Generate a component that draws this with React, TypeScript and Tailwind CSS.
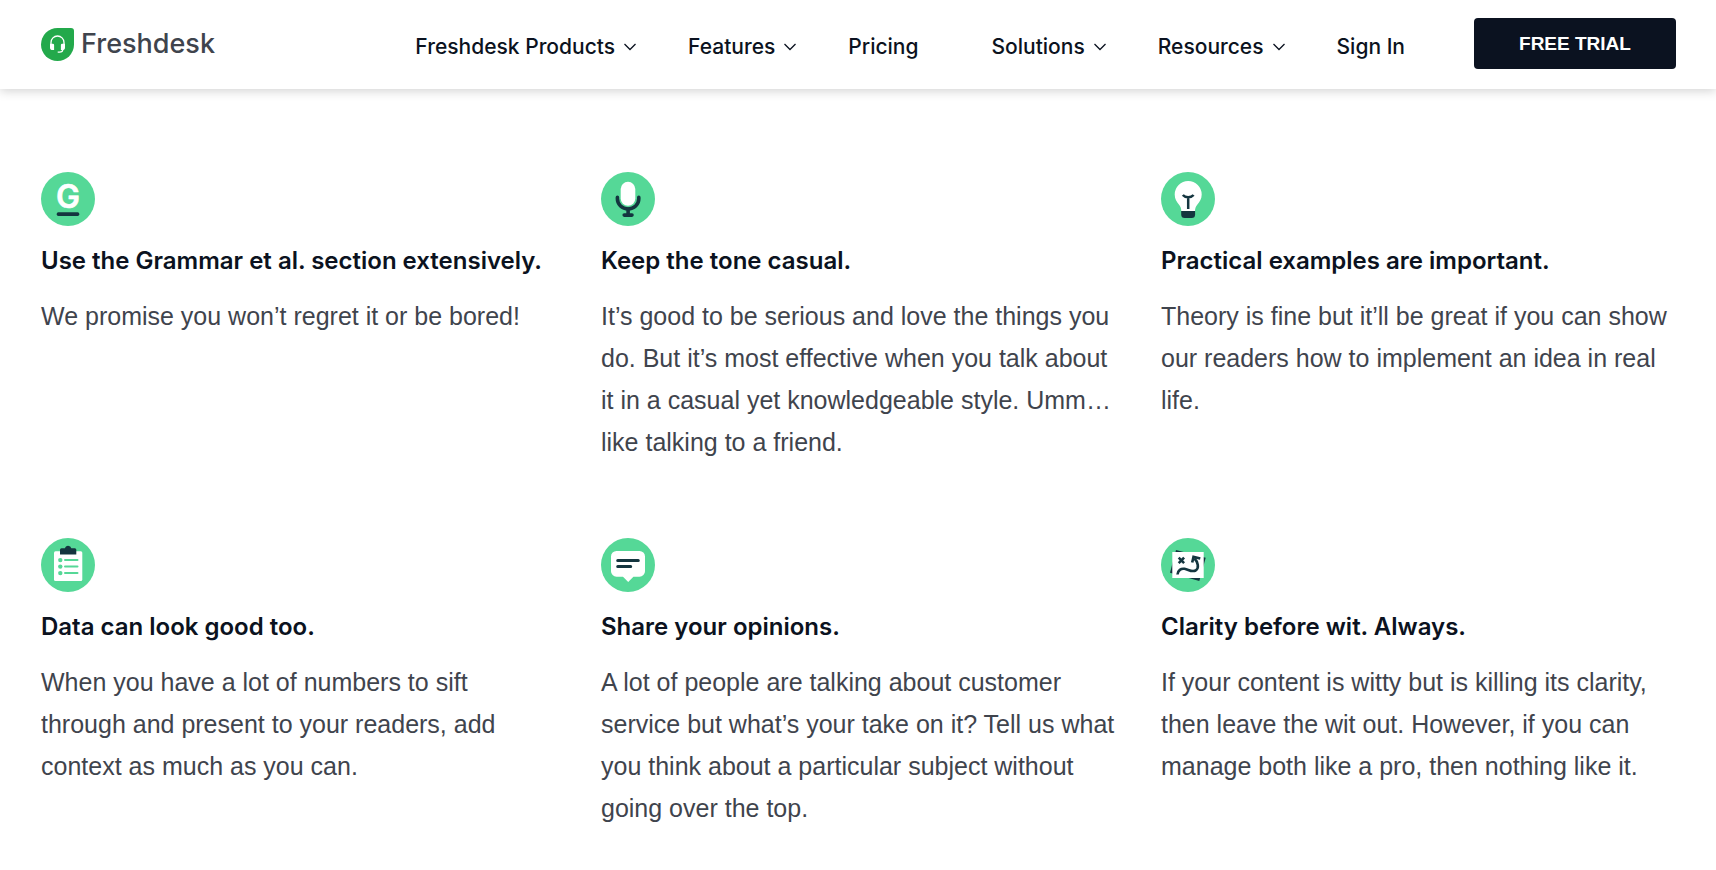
import type { ReactNode } from "react";

const DARK = "#14353f";

function Badge({ children }: { children: ReactNode }) {
  return (
    <svg viewBox="0 0 54 54" className="block size-[54px]" aria-hidden="true">
      <circle cx="27" cy="27" r="27" fill="#55d897" />
      {children}
    </svg>
  );
}

const grammarIcon = (
  <Badge>
    <text x="27" y="35.6" textAnchor="middle" fill="#fff" stroke="#fff" strokeWidth="0.6" strokeLinejoin="round" className="font-['Inter',sans-serif] text-[32px] font-semibold">
      G
    </text>
    <rect x="15.7" y="40.3" width="22.6" height="3.6" rx="1.6" fill={DARK} />
  </Badge>
);

const micIcon = (
  <Badge>
    <rect x="19.7" y="9.8" width="14.6" height="24" rx="7.3" fill="#fff" />
    <g fill="none" stroke={DARK} strokeWidth="3.6" strokeLinecap="round">
      <path d="M16.4 25.4v1.4a10.7 10.2 0 0 0 21.4 0v-1.4" />
      <path d="M27.1 37v6M23.2 43.1h7.8" />
    </g>
  </Badge>
);

const bulbIcon = (
  <Badge>
    <path d="M27.2 9a13.5 13.5 0 0 1 13.5 13.5c0 4.6-2.2 7.4-4.3 10-1.6 2-2.4 3.9-2.4 6.5H20.3c0-2.6-.8-4.5-2.4-6.5-2.1-2.6-4.2-5.4-4.2-10A13.5 13.5 0 0 1 27.2 9z" fill="#fff" />
    <path d="M20.2 39h13.9v3.5a3.5 3.5 0 0 1-3.5 3.5h-6.9a3.5 3.5 0 0 1-3.5-3.5z" fill={DARK} />
    <path d="M21.8 23c2.5 3 8.3 3 10.8 0M27.2 25v12" fill="none" stroke={DARK} strokeWidth="2.5" />
  </Badge>
);

const clipboardIcon = (
  <Badge>
    <rect x="13" y="13.3" width="28.3" height="29.7" rx="1.5" fill="#fff" />
    <path d="M19 16.5v-4.7a1.5 1.5 0 0 1 1.5-1.5h3.5a3.2 3.2 0 0 1 6.3 0h3.5a1.5 1.5 0 0 1 1.5 1.5v4.7z" fill={DARK} />
    <g fill="#55d897">
      <circle cx="19.3" cy="22.1" r="2.2" />
      <circle cx="19.3" cy="28.6" r="2.2" />
      <circle cx="19.3" cy="35.1" r="2.2" />
    </g>
    <path d="M24 22.1h12.5M24 28.6h12.5M24 35.1h12.5" stroke="#55d897" strokeWidth="2" strokeLinecap="round" />
  </Badge>
);

const chatIcon = (
  <Badge>
    <path d="M15.5 13h23a5.5 5.5 0 0 1 5.5 5.5v14.7a5.5 5.5 0 0 1-5.5 5.5h-6.1L27.2 44l-5.2-5.3h-6.5a5.5 5.5 0 0 1-5.5-5.5V18.5a5.5 5.5 0 0 1 5.5-5.5z" fill="#fff" />
    <path d="M16.7 22.4h20.6M16.7 28.5h13" stroke={DARK} strokeWidth="3" strokeLinecap="round" />
  </Badge>
);

const mapIcon = (
  <Badge>
    <path d="M15 12l29.7 7.7L38.3 43 9 34.7z" fill={DARK} />
    <rect x="11.3" y="14" width="31.4" height="26" fill="#fff" />
    <g fill="none" stroke={DARK} strokeWidth="2.6">
      <path d="M17.7 19.7l5.4 5.4M23.1 19.7l-5.4 5.4" />
      <path d="M16.5 36.5c.4-4.2 3.5-6.3 7-5.7 4 .7 7.2 3.7 11.2 1.7 3.6-2.2 2.4-8.5-1.2-12" />
      <path d="M31.2 24.5l1.3-5.6 6.8 1.6" />
    </g>
  </Badge>
);

const tips = [
  { icon: grammarIcon, title: "Use the Grammar et al. section extensively.", body: "We promise you won’t regret it or be bored!" },
  { icon: micIcon, title: "Keep the tone casual.", body: "It’s good to be serious and love the things you do. But it’s most effective when you talk about it in a casual yet knowledgeable style. Umm… like talking to a friend." },
  { icon: bulbIcon, title: "Practical examples are important.", body: "Theory is fine but it’ll be great if you can show our readers how to implement an idea in real life." },
  { icon: clipboardIcon, title: "Data can look good too.", body: "When you have a lot of numbers to sift through and present to your readers, add context as much as you can." },
  { icon: chatIcon, title: "Share your opinions.", body: "A lot of people are talking about customer service but what’s your take on it? Tell us what you think about a particular subject without going over the top." },
  { icon: mapIcon, title: "Clarity before wit. Always.", body: "If your content is witty but is killing its clarity, then leave the wit out. However, if you can manage both like a pro, then nothing like it." },
];

const links = [
  { label: "Freshdesk Products", menu: true },
  { label: "Features", menu: true },
  { label: "Pricing", menu: false },
  { label: "Solutions", menu: true },
  { label: "Resources", menu: true },
  { label: "Sign In", menu: false },
];

function Chevron() {
  return (
    <svg viewBox="0 0 12 8" className="h-2 w-3" fill="none" stroke="currentColor" strokeWidth="1.3" aria-hidden="true">
      <path d="M.5 1L6 6.5 11.5 1" />
    </svg>
  );
}

function Logo() {
  return (
    <a href="#" className="flex items-center gap-[7px] text-[#3f444d]">
      <svg viewBox="0 0 33 33" className="size-[33px]" aria-hidden="true">
        <path d="M16.5 0H30a3 3 0 0 1 3 3v13.5A16.5 16.5 0 1 1 16.5 0z" fill="#23a94b" />
        <path d="M10 17v-2.5a6.5 6.5 0 0 1 13 0V17" fill="none" stroke="#fff" strokeWidth="1.3" />
        <path d="M9.3 15.8h2.5a1.3 1.3 0 0 1 1.3 1.3v5h-1.4a2.7 2.7 0 0 1-2.7-2.7v-3.3zM23.7 15.8h-2.5a1.3 1.3 0 0 0-1.3 1.3v5h1.4a2.7 2.7 0 0 0 2.7-2.7v-3.3z" fill="#fff" />
        <path d="M21.8 21.5c0 1.8-1.3 2.6-3.2 2.6h-1.9" fill="none" stroke="#fff" strokeWidth="1.2" />
      </svg>
      <span className="text-[27px] leading-[34px] font-medium">Freshdesk</span>
    </a>
  );
}

export default function App() {
  return (
    <div className="min-h-screen bg-white font-['Inter','Liberation_Sans',sans-serif] text-[#0b1220]">
      <header className="flex h-[89px] items-start justify-between bg-white pr-10 pl-[41px] shadow-[0_2px_10px_rgba(0,0,0,0.18)]">
        <div className="pt-[27px]">
          <Logo />
        </div>
        <div className="flex items-start gap-12">
          <nav className="flex gap-[52px] pt-[31px]">
            {links.map((link) => (
              <a key={link.label} href="#" className="flex items-center gap-[9px] text-[21px] leading-8 font-medium whitespace-nowrap">
                {link.label}
                {link.menu ? <Chevron /> : <span className="w-3" />}
              </a>
            ))}
          </nav>
          <button type="button" className="mt-[18px] h-[51px] w-[202px] rounded-[4px] bg-[#0b1220] pt-px font-['Liberation_Sans',Arial,sans-serif] text-[19px] font-bold text-white">
            FREE TRIAL
          </button>
        </div>
      </header>
      <main className="grid grid-cols-3 gap-x-11 gap-y-[75px] pt-[83px] pr-[39px] pb-10 pl-[41px]">
        {tips.map((tip) => (
          <article key={tip.title}>
            {tip.icon}
            <h2 className="mt-[17px] text-[24px] leading-9 font-semibold whitespace-nowrap">{tip.title}</h2>
            <p className="mt-4 font-['Liberation_Sans',Arial,sans-serif] text-[25px] leading-[42px] text-[#3f444d]">{tip.body}</p>
          </article>
        ))}
      </main>
    </div>
  );
}
